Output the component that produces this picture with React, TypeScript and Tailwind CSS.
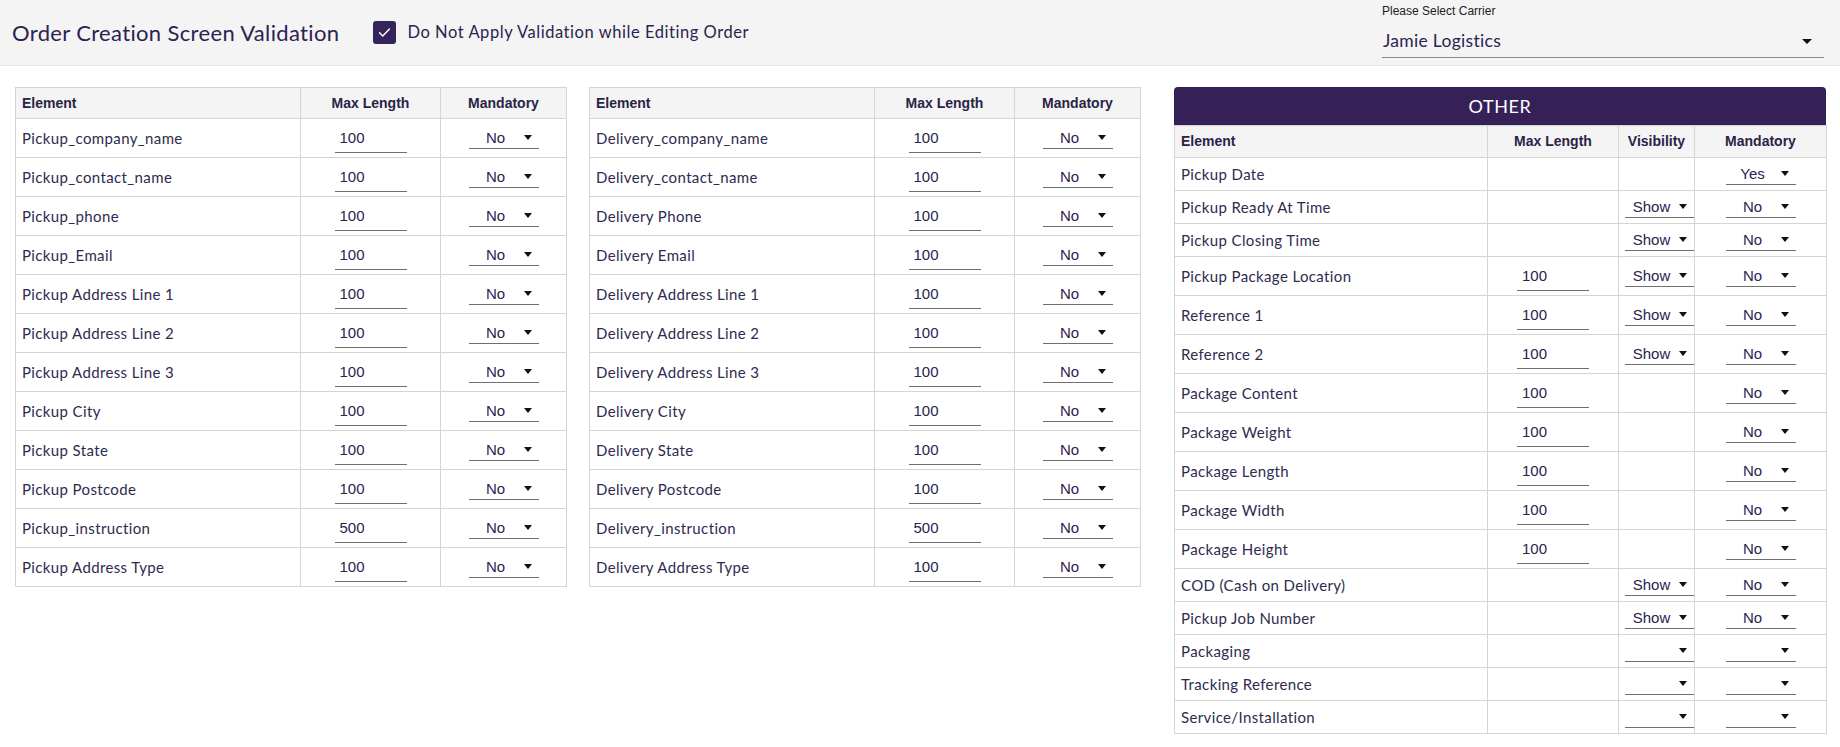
import React from 'react';

type Row = { name: string; max: string };

const pickupRows: Row[] = [
  { name: 'Pickup_company_name', max: '100' },
  { name: 'Pickup_contact_name', max: '100' },
  { name: 'Pickup_phone', max: '100' },
  { name: 'Pickup_Email', max: '100' },
  { name: 'Pickup Address Line 1', max: '100' },
  { name: 'Pickup Address Line 2', max: '100' },
  { name: 'Pickup Address Line 3', max: '100' },
  { name: 'Pickup City', max: '100' },
  { name: 'Pickup State', max: '100' },
  { name: 'Pickup Postcode', max: '100' },
  { name: 'Pickup_instruction', max: '500' },
  { name: 'Pickup Address Type', max: '100' },
];

const deliveryRows: Row[] = [
  { name: 'Delivery_company_name', max: '100' },
  { name: 'Delivery_contact_name', max: '100' },
  { name: 'Delivery Phone', max: '100' },
  { name: 'Delivery Email', max: '100' },
  { name: 'Delivery Address Line 1', max: '100' },
  { name: 'Delivery Address Line 2', max: '100' },
  { name: 'Delivery Address Line 3', max: '100' },
  { name: 'Delivery City', max: '100' },
  { name: 'Delivery State', max: '100' },
  { name: 'Delivery Postcode', max: '100' },
  { name: 'Delivery_instruction', max: '500' },
  { name: 'Delivery Address Type', max: '100' },
];

type OtherRow = { name: string; max?: string; vis?: string; mand?: string };

// undefined = empty cell, '' = select with no value
const otherRows: OtherRow[] = [
  { name: 'Pickup Date', mand: 'Yes' },
  { name: 'Pickup Ready At Time', vis: 'Show', mand: 'No' },
  { name: 'Pickup Closing Time', vis: 'Show', mand: 'No' },
  { name: 'Pickup Package Location', max: '100', vis: 'Show', mand: 'No' },
  { name: 'Reference 1', max: '100', vis: 'Show', mand: 'No' },
  { name: 'Reference 2', max: '100', vis: 'Show', mand: 'No' },
  { name: 'Package Content', max: '100', mand: 'No' },
  { name: 'Package Weight', max: '100', mand: 'No' },
  { name: 'Package Length', max: '100', mand: 'No' },
  { name: 'Package Width', max: '100', mand: 'No' },
  { name: 'Package Height', max: '100', mand: 'No' },
  { name: 'COD (Cash on Delivery)', vis: 'Show', mand: 'No' },
  { name: 'Pickup Job Number', vis: 'Show', mand: 'No' },
  { name: 'Packaging', vis: '', mand: '' },
  { name: 'Tracking Reference', vis: '', mand: '' },
  { name: 'Service/Installation', vis: '', mand: '' },
];

const Arrow = () => (
  <span className="inline-block w-0 h-0 border-l-[4.5px] border-r-[4.5px] border-t-[5px] border-l-transparent border-r-transparent border-t-[#111]" />
);

const Select = ({ value, width = 'w-[70px]' }: { value: string; width?: string }) => (
  <div className={`${width} h-[22px] mx-auto flex items-center border-b border-[#6f6f6f]`}>
    <span className="flex-1 text-center text-[15px] leading-none text-[#2a2350] font-['Liberation_Sans',Arial,sans-serif]">
      {value}
    </span>
    <span className="w-[16px] flex justify-end pr-[7px]">
      <Arrow />
    </span>
  </div>
);

const MaxInput = ({ value }: { value: string }) => (
  <input
    readOnly
    value={value}
    className="block mx-auto w-[72px] h-[29px] px-[5px] bg-transparent border-b border-[#6f6f6f] outline-none text-[15px] text-[#2a2350] font-['Liberation_Sans',Arial,sans-serif]"
  />
);

const th = "border border-[#d5d5d5] text-[14px] font-bold text-[#2a2346] font-['Liberation_Sans',Arial,sans-serif] px-[6px]";
const td = 'border border-[#d5d5d5] px-[6px] align-middle';
const nameCls = "text-[15px] tracking-[0.37px] text-[#2e2b4f] font-['Lato',sans-serif] whitespace-nowrap";

const FieldTable = ({ rows }: { rows: Row[] }) => (
  <table className="w-[551px] table-fixed border-collapse bg-white">
    <colgroup>
      <col className="w-[285px]" />
      <col className="w-[140px]" />
      <col className="w-[126px]" />
    </colgroup>
    <thead>
      <tr className="h-[31px] bg-[#f4f4f4]">
        <th className={`${th} text-left`}>Element</th>
        <th className={`${th} text-center`}>Max Length</th>
        <th className={`${th} text-center`}>Mandatory</th>
      </tr>
    </thead>
    <tbody>
      {rows.map((r) => (
        <tr key={r.name} className="h-[39px]">
          <td className={`${td} ${nameCls}`}>{r.name}</td>
          <td className={td}>
            <MaxInput value={r.max} />
          </td>
          <td className={td}>
            <Select value="No" />
          </td>
        </tr>
      ))}
    </tbody>
  </table>
);

const OtherTable = () => (
  <div className="w-[652px]">
    <div className="h-[38px] rounded-t-[4px] bg-[#352157] flex items-center justify-center text-white text-[18px] font-['Lato',sans-serif] tracking-[0.6px]">
      OTHER
    </div>
    <table className="w-[652px] table-fixed border-collapse bg-white">
      <colgroup>
        <col className="w-[313px]" />
        <col className="w-[131px]" />
        <col className="w-[76px]" />
        <col className="w-[132px]" />
      </colgroup>
      <thead>
        <tr className="h-[32px] bg-[#f4f4f4]">
          <th className={`${th} text-left`}>Element</th>
          <th className={`${th} text-center`}>Max Length</th>
          <th className={`${th} text-center px-[2px]`}>Visibility</th>
          <th className={`${th} text-center`}>Mandatory</th>
        </tr>
      </thead>
      <tbody>
        {otherRows.map((r) => (
          <tr key={r.name} className={r.max ? 'h-[39px]' : 'h-[33px]'}>
            <td className={`${td} ${nameCls}`}>{r.name}</td>
            <td className={td}>{r.max !== undefined && <MaxInput value={r.max} />}</td>
            <td className={`${td} px-[3px]`}>
              {r.vis !== undefined && <Select value={r.vis} width="w-[69px]" />}
            </td>
            <td className={td}>{r.mand !== undefined && <Select value={r.mand} />}</td>
          </tr>
        ))}
      </tbody>
    </table>
  </div>
);

export default function App() {
  return (
    <div className="w-[1840px] h-[747px] bg-white overflow-hidden">
      <header className="h-[66px] bg-[#f4f4f4] border-b border-[#e8e8e8] flex items-center pl-[12px] pr-[16px]">
        <h1 className="text-[22px] tracking-[0.35px] text-[#2b2350] font-['Lato',sans-serif] font-normal">
          Order Creation Screen Validation
        </h1>
        <label className="ml-[34px] flex items-center gap-[11px]">
          <span className="w-[23px] h-[23px] rounded-[3px] bg-[#35235a] flex items-center justify-center">
            <svg width="17" height="17" viewBox="0 0 24 24" fill="none" stroke="white" strokeWidth="2" strokeLinecap="round" strokeLinejoin="round">
              <path d="M5 12.5l4.5 4.5L19 7" />
            </svg>
          </span>
          <span className="text-[16.5px] tracking-[0.55px] text-[#2b2350] font-['Lato',sans-serif]">
            Do Not Apply Validation while Editing Order
          </span>
        </label>
        <div className="ml-auto w-[442px] self-start pt-[4px]">
          <div className="text-[12px] leading-[14px] text-[#222] font-['Liberation_Sans',Arial,sans-serif]">
            Please Select Carrier
          </div>
          <div className="mt-[8px] h-[32px] flex items-center justify-between border-b border-[#8a8a8a] pl-[1px] pr-[12px]">
            <span className="text-[17.5px] tracking-[0.3px] text-[#2b2350] font-['Lato',sans-serif]">Jamie Logistics</span>
            <span className="inline-block w-0 h-0 border-l-[5px] border-r-[5px] border-t-[5px] border-l-transparent border-r-transparent border-t-[#111]" />
          </div>
        </div>
      </header>
      <main className="flex items-start pt-[21px] pl-[15px]">
        <FieldTable rows={pickupRows} />
        <div className="ml-[22px]">
          <FieldTable rows={deliveryRows} />
        </div>
        <div className="ml-[33px]">
          <OtherTable />
        </div>
      </main>
    </div>
  );
}
